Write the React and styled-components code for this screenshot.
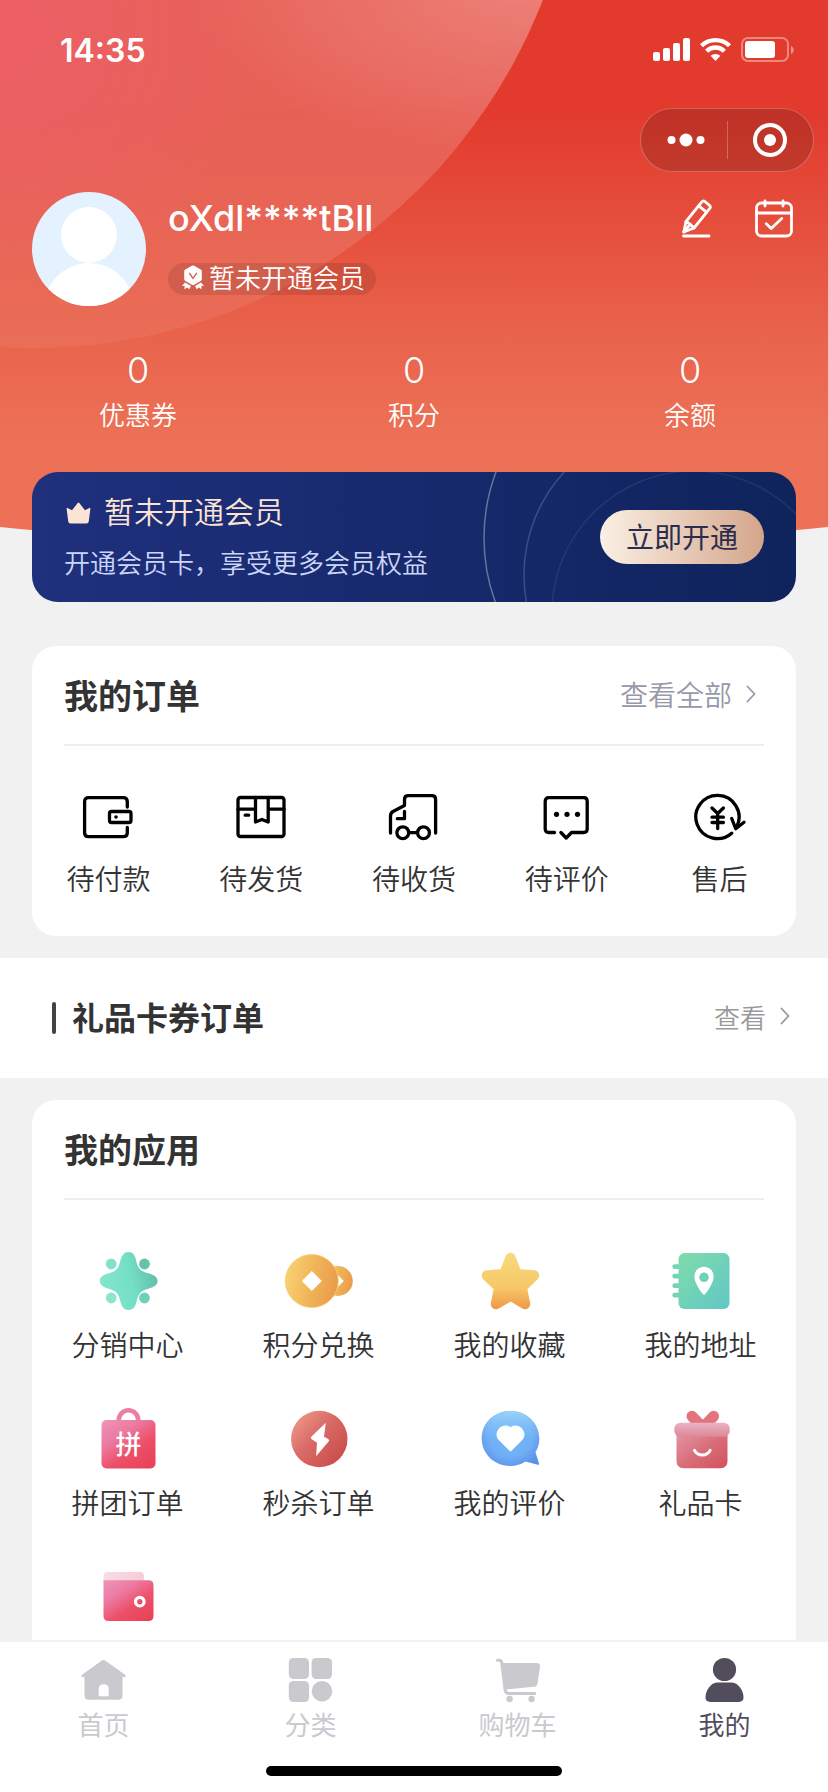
import styled, { createGlobalStyle } from 'styled-components';

const stats = [
    { value: 0, label: '优惠券' },
    { value: 0, label: '积分' },
    { value: 0, label: '余额' },
];

const orders = [
    { label: '待付款', Icon: PayIcon },
    { label: '待发货', Icon: PackageIcon },
    { label: '待收货', Icon: TruckIcon },
    { label: '待评价', Icon: CommentIcon },
    { label: '售后', Icon: RefundIcon },
];

const apps = [
    { label: '分销中心', Icon: ShareIcon },
    { label: '积分兑换', Icon: CoinIcon },
    { label: '我的收藏', Icon: StarIcon },
    { label: '我的地址', Icon: AddressIcon },
    { label: '拼团订单', Icon: BagIcon },
    { label: '秒杀订单', Icon: FlashIcon },
    { label: '我的评价', Icon: ReviewIcon },
    { label: '礼品卡', Icon: GiftIcon },
    { Icon: WalletIcon },
];

const tabs = [
    { label: '首页', Icon: HomeIcon },
    { label: '分类', Icon: CategoryIcon },
    { label: '购物车', Icon: CartIcon },
    { label: '我的', Icon: UserIcon, active: true },
];

const App = () => {
    return (
        <Screen>
            <GlobalStyle />
            <Content>
                <Header>
                    <Backdrop />
                    <StatusBar>
                        <Time>14:35</Time>
                        <StatusIcons />
                    </StatusBar>
                    <Capsule>
                        <CapsuleButton aria-label="更多">
                            <svg width="44" height="20" viewBox="-4 0 44 20" fill="#fff">
                                <circle cx="5.500" cy="10" r="4" />
                                <circle cx="20" cy="10" r="6.500" />
                                <circle cx="34.500" cy="10" r="4" />
                            </svg>
                        </CapsuleButton>
                        <CapsuleButton aria-label="关闭">
                            <svg width="36" height="36" viewBox="0 0 36 36">
                                <circle cx="18" cy="18" r="15" fill="none" stroke="#fff" strokeWidth="4" />
                                <circle cx="18" cy="18" r="6" fill="#fff" />
                            </svg>
                        </CapsuleButton>
                    </Capsule>
                    <Profile>
                        <Avatar viewBox="0 0 114 114">
                            <circle cx="57" cy="57" r="57" fill="#e3f2fe" />
                            <clipPath id="avatar">
                                <circle cx="57" cy="57" r="57" />
                            </clipPath>
                            <circle cx="57" cy="43" r="28" fill="#fff" />
                            <circle cx="57" cy="116" r="45" fill="#fff" clipPath="url(#avatar)" />
                        </Avatar>
                        <Info>
                            <Name>oXdl****tBll</Name>
                            <Badge>
                                <MedalIcon />
                                暂未开通会员
                            </Badge>
                        </Info>
                        <Actions>
                            <IconButton aria-label="编辑">
                                <EditIcon />
                            </IconButton>
                            <IconButton aria-label="签到">
                                <CalendarIcon />
                            </IconButton>
                        </Actions>
                    </Profile>
                    <Stats>
                        {stats.map(({ value, label }) => (
                            <Stat href="#" key={label}>
                                <strong>{value}</strong>
                                <span>{label}</span>
                            </Stat>
                        ))}
                    </Stats>
                </Header>

                <VipCard>
                    <VipRings />
                    <div>
                        <VipTitle>
                            <CrownIcon />
                            暂未开通会员
                        </VipTitle>
                        <VipText>开通会员卡，享受更多会员权益</VipText>
                    </div>
                    <OpenButton>立即开通</OpenButton>
                </VipCard>

                <Card>
                    <CardHeader>
                        <h2>我的订单</h2>
                        <MoreLink href="#" $size={28} $color="#9699a9">
                            查看全部
                            <Chevron />
                        </MoreLink>
                    </CardHeader>
                    <OrderGrid>
                        {orders.map(({ label, Icon }) => (
                            <OrderItem href="#" key={label}>
                                <Icon />
                                <span>{label}</span>
                            </OrderItem>
                        ))}
                    </OrderGrid>
                </Card>

                <GiftRow>
                    <h2>礼品卡券订单</h2>
                    <MoreLink href="#" $size={26} $color="#999">
                        查看
                        <Chevron />
                    </MoreLink>
                </GiftRow>

                <Card>
                    <CardHeader>
                        <h2>我的应用</h2>
                    </CardHeader>
                    <AppGrid>
                        {apps.map(({ label, Icon }, i) => (
                            <AppItem href="#" key={i} aria-label={label || '钱包'}>
                                <Icon />
                                {label && <span>{label}</span>}
                            </AppItem>
                        ))}
                    </AppGrid>
                </Card>
            </Content>

            <TabBar>
                <Tabs>
                    {tabs.map(({ label, Icon, active }) => (
                        <Tab href="#" key={label} $active={active}>
                            <Icon />
                            <span>{label}</span>
                        </Tab>
                    ))}
                </Tabs>
                <HomeIndicator />
            </TabBar>
        </Screen>
    );
};

/* ---------- Icons ---------- */

function StatusIcons() {
    return (
        <svg width="141" height="26" viewBox="0 0 141 26" fill="#fff">
            <rect x="0" y="15" width="7" height="9" rx="2" />
            <rect x="10" y="11" width="7" height="13" rx="2" />
            <rect x="20" y="6" width="7" height="18" rx="2" />
            <rect x="30" y="1" width="7" height="23" rx="2" />
            <g fill="none" stroke="#fff" strokeWidth="4.4">
                <path d="M48.500 8.800a20 20 0 0 1 28 0" />
                <path d="M53.600 14.200a12.600 12.600 0 0 1 17.800 0" />
            </g>
            <path d="M57.600 18.800a7.200 7.200 0 0 1 9.800 0L62.500 24Z" />
            <rect x="89" y="1" width="46" height="23" rx="6" fill="none" stroke="#fff" strokeOpacity=".4" strokeWidth="2" />
            <rect x="92" y="4" width="30" height="17" rx="3" />
            <path d="M138 9c3.600 1.500 3.600 6.500 0 8Z" opacity=".45" />
        </svg>
    );
}

function MedalIcon() {
    return (
        <svg width="28" height="28" viewBox="0 0 28 28" fill="#fff">
            <path d="M12.800 .8q1.200-.7 2.400 0l6.500 3.700q1.100.7 1.100 2v7.600q0 1.300-1.100 2l-6.500 3.700q-1.200.7-2.400 0l-6.500-3.700q-1.100-.7-1.100-2V6.500q0-1.300 1.100-2Z" />
            <path d="M6 17.500l6 3.400-1.800 3.300-2-1.700-2.800 1.700.3-3.200-2.700-.3ZM22 17.500l-6 3.400 1.800 3.300 2-1.700 2.800 1.700-.3-3.200 2.700-.3Z" />
            <path d="M10.300 8l3.700 5.300 3.900-5.500" fill="none" stroke="#d4604f" strokeWidth="1.400" />
        </svg>
    );
}

function EditIcon() {
    return (
        <svg width="44" height="44" viewBox="0 0 44 44" fill="none" stroke="#fff" strokeWidth="2.800" strokeLinecap="round" strokeLinejoin="round">
            <path d="M10 25.500 25.800 5.800q1.400-1.700 3.100-.3l4.600 3.800q1.700 1.400.3 3.100L18 32 7.800 36Z" />
            <path d="M22.700 9.800l7.800 6.400M10 25.500l4.500 3 3.500 3.500M7.800 36l5-6" />
            <path d="M7.500 40h25.500" />
        </svg>
    );
}

function CalendarIcon() {
    return (
        <svg width="44" height="44" viewBox="0 0 44 44" fill="none" stroke="#fff" strokeWidth="2.800" strokeLinecap="round" strokeLinejoin="round">
            <rect x="4.500" y="7" width="35" height="33" rx="5" />
            <path d="M4.500 17h35M13 5v5M31 5v5M14.300 27.700l4.900 4.800 10.500-10" />
        </svg>
    );
}

function VipRings() {
    return (
        <Rings viewBox="464 472 332 130" fill="none" stroke="#fff" strokeWidth="1.500">
            <circle cx="672" cy="538" r="188" strokeOpacity=".35" />
            <circle cx="676" cy="575" r="152" strokeOpacity=".18" />
            <circle cx="694" cy="613" r="142" strokeOpacity=".08" />
        </Rings>
    );
}

function CrownIcon() {
    return (
        <svg width="28" height="28" viewBox="0 0 28 28" fill="#fbe3d5">
            <path d="M2.600 10.500q0-1 1-.5L8 12.300 13.700 5q.8-1 1.600 0L21 12.300l4.400-2.300q1-.5 1 .5l-1.600 12.800q-.3 2.200-2.300 2.200H6.500q-2 0-2.300-2.200Z" />
        </svg>
    );
}

function Chevron() {
    return (
        <svg width="10" height="18" viewBox="0 0 10 18" fill="none" stroke="currentColor" strokeWidth="1.800" strokeLinecap="round" strokeLinejoin="round">
            <path d="M1.500 1.500L8.500 9l-7 7.500" />
        </svg>
    );
}

function PayIcon() {
    return (
        <OrderSvg>
            <path d="M47.300 17V11.700q0-4-4-4H8.600q-4 0-4 4v31q0 4 4 4h34.700q4 0 4-4v-5.200" />
            <rect x="29.500" y="21.500" width="21.500" height="11" rx="2" />
            <circle cx="36" cy="27" r="1.800" fill="#000" stroke="none" />
        </OrderSvg>
    );
}

function PackageIcon() {
    return (
        <OrderSvg>
            <rect x="5" y="7.500" width="46" height="39" rx="2.500" />
            <path d="M5 19.200h17.500M35.200 19.200H51M22.500 7.500V32l6.400-2.500 6.300 2.500V7.500M12.200 25.200h3.500" />
        </OrderSvg>
    );
}

function TruckIcon() {
    return (
        <OrderSvg>
            <path d="M4.500 43V26q0-3 2.500-4.500L18.500 15.500V9.500q0-3.800 3.800-3.800h23.500q3.800 0 3.800 3.800V43" />
            <path d="M18.500 21.500v7.200h-7.200M22.800 42.700h8.500" />
            <circle cx="16.800" cy="42.700" r="5.900" />
            <circle cx="37.500" cy="42.700" r="5.900" />
        </OrderSvg>
    );
}

function CommentIcon() {
    return (
        <OrderSvg>
            <path d="M15.500 42.500H9.700q-3.500 0-3.500-3.500V11.200q0-3.500 3.500-3.500h35q3.500 0 3.500 3.500V39q0 3.500-3.500 3.500H32.500L27.200 48l-5.300-5.500" />
            <g fill="#000" stroke="none">
                <circle cx="17.500" cy="24.300" r="2.600" />
                <circle cx="28" cy="24.300" r="2.600" />
                <circle cx="38.500" cy="24.300" r="2.600" />
            </g>
        </OrderSvg>
    );
}

function RefundIcon() {
    return (
        <OrderSvg>
            <path d="M39.700 43.200a21.600 21.600 0 1 1 5.500-7.500" />
            <path d="M39.700 28.500l4 10.200 8.300-6.400" />
            <path d="M20 18l5.700 5.500 5.700-5.500M25.700 23.500v15M20 27.200h11.400M20 32.500h11.400" />
        </OrderSvg>
    );
}

function ShareIcon() {
    return (
        <AppSvg>
            <linearGradient id="share" x1="0" y1=".6" x2="1" y2=".4">
                <stop offset="0" stopColor="#84e6ca" />
                <stop offset=".55" stopColor="#74dfc5" />
                <stop offset="1" stopColor="#5fbfa9" />
            </linearGradient>
            <path
                fill="url(#share)"
                d="M36.500 8C41 8 43 11.500 44 16C46 24.500 48 27 57 29.500C62 31 65.500 33 65.500 37C65.500 41 62 43 57 44.500C48 47 46.500 49.500 44.500 58C43 63 41 66 36.500 66C32 66 30 63 28.500 58C26.500 49.500 25 47 16 44.500C11 43 7.800 41 7.800 37C7.800 33 11 31 16 29.500C25 27 26.500 24.500 28.500 16C30 11.500 32 8 36.500 8Z"
            />
            <circle cx="19.200" cy="20" r="5.400" fill="#86e0c9" />
            <circle cx="52.500" cy="20" r="5.400" fill="#66c2ae" />
            <circle cx="19.200" cy="54" r="5.400" fill="#8ce6cd" />
            <circle cx="52.500" cy="54" r="5.400" fill="#6fd0ba" />
        </AppSvg>
    );
}

function CoinIcon() {
    return (
        <AppSvg>
            <linearGradient id="coin" x1="0" y1=".4" x2="1" y2=".6">
                <stop offset="0" stopColor="#f8d273" />
                <stop offset=".5" stopColor="#f1b458" />
                <stop offset="1" stopColor="#ea9a4b" />
            </linearGradient>
            <circle cx="54.800" cy="37" r="15" fill="url(#coin)" />
            <path d="M54.800 31l6 6-6 6Z" fill="#fff" />
            <circle cx="28.800" cy="37" r="26.500" fill="url(#coin)" stroke="#f6cd6c" strokeWidth=".8" />
            <path d="M28.800 27l10 10-10 10-10-10Z" fill="#fff" />
        </AppSvg>
    );
}

function StarIcon() {
    return (
        <AppSvg>
            <linearGradient id="star" gradientUnits="userSpaceOnUse" x1="36" y1="8" x2="36" y2="67">
                <stop offset="0" stopColor="#f8da7c" />
                <stop offset=".6" stopColor="#f6c868" />
                <stop offset="1" stopColor="#ef9345" />
            </linearGradient>
            <path
                d="M36.500 14l6.200 16.300 17.300 1.200-12.300 12L51 60 36.500 51.500 22 60l3.300-16.500-12.300-12 17.300-1.200Z"
                fill="url(#star)"
                stroke="url(#star)"
                strokeWidth="10.500"
                strokeLinejoin="round"
            />
        </AppSvg>
    );
}

function AddressIcon() {
    return (
        <AppSvg>
            <linearGradient id="address" x1="0" y1="0" x2="1" y2="1">
                <stop offset="0" stopColor="#80dcab" />
                <stop offset="1" stopColor="#61c7c6" />
            </linearGradient>
            <path d="M9.700 22.700h6M9.700 32.200h6M9.700 41.700h6M9.700 51.200h6" stroke="#74d4b2" strokeWidth="4.800" strokeLinecap="round" />
            <rect x="13.500" y="9" width="51" height="56" rx="6" fill="url(#address)" />
            <path
                fill="#fff"
                fillRule="evenodd"
                d="M39 22.700c5.500 0 9.600 4.200 9.600 9.800 0 5-3.600 11.500-8.400 17.400q-1.200 1.500-2.400 0C33 44 29.400 37.500 29.400 32.500c0-5.600 4.100-9.800 9.600-9.800ZM39 28.500a4.800 4.800 0 1 0 0 9.600 4.800 4.800 0 0 0 0-9.600Z"
            />
        </AppSvg>
    );
}

function PinkGradient({ id }) {
    return (
        <linearGradient id={id} x1=".1" y1="0" x2=".9" y2="1">
            <stop offset="0" stopColor="#ef90b6" />
            <stop offset=".3" stopColor="#ec7ba2" />
            <stop offset=".62" stopColor="#ec5068" />
            <stop offset="1" stopColor="#e94156" />
        </linearGradient>
    );
}

function BagIcon() {
    return (
        <AppSvg>
            <PinkGradient id="bag" />
            <path d="M26.800 20v-2a9.700 9.700 0 0 1 19.400 0v2" fill="none" stroke="#ec7ea5" strokeWidth="4.600" />
            <rect x="9.500" y="18" width="54" height="48.500" rx="5" fill="url(#bag)" />
            <text x="36.500" y="52" textAnchor="middle" fontSize="26" fontWeight="500" fill="#fff">
                拼
            </text>
        </AppSvg>
    );
}

function FlashIcon() {
    return (
        <AppSvg>
            <linearGradient id="flash" x1=".1" y1=".1" x2=".9" y2=".8">
                <stop offset="0" stopColor="#ed9585" />
                <stop offset=".45" stopColor="#d96b68" />
                <stop offset="1" stopColor="#cb4f4c" />
            </linearGradient>
            <circle cx="36.300" cy="37" r="28.200" fill="url(#flash)" />
            <path d="M42.800 20.700L28.500 34.500q-1.300 1.500.2 2.700l5.300 3.600-.9 13.500L45.600 39.600q1.500-1.700-.4-2.700l-4.200-2.200Z" fill="#fff" />
        </AppSvg>
    );
}

function ReviewIcon() {
    return (
        <AppSvg>
            <radialGradient id="review" cx=".5" cy=".45" r=".62">
                <stop offset="0" stopColor="#6fb9f8" />
                <stop offset=".6" stopColor="#70b0f5" />
                <stop offset="1" stopColor="#5b8fea" />
            </radialGradient>
            <linearGradient id="reviewTop" x1="0" y1="0" x2="0" y2="1">
                <stop offset="0" stopColor="#9ad4fa" />
                <stop offset=".55" stopColor="#7fc0f8" stopOpacity="0" />
            </linearGradient>
            <path
                fill="url(#review)"
                d="M36.500 9C52.600 9 65.300 21 65.300 36.500c0 5-1.300 9.700-3.800 13.800L65 61.500q.3 1.500-1.300 1.300L51.500 59.500C47 62.300 42 64 36.500 64 20.500 64 7.700 52 7.700 36.500S20.500 9 36.500 9Z"
            />
            <ellipse cx="36.500" cy="36.500" rx="28.800" ry="27.500" fill="url(#reviewTop)" />
            <path d="M36.500 25.200c3.500-2.700 8.500-2 11.500 1.200 3.300 3.600 3.300 8.800-.2 12.200L37.500 48.700q-1 1-2 0L25.200 38.600c-3.500-3.400-3.500-8.600-.2-12.200 3-3.200 8-3.900 11.500-1.200Z" fill="#fff" />
        </AppSvg>
    );
}

function GiftIcon() {
    return (
        <AppSvg>
            <linearGradient id="gift" x1="0" y1="0" x2="1" y2="1">
                <stop offset="0" stopColor="#e29aa6" />
                <stop offset=".5" stopColor="#da6f7c" />
                <stop offset="1" stopColor="#d25059" />
            </linearGradient>
            <linearGradient id="lid" x1="0" y1="0" x2="0" y2="1">
                <stop offset="0" stopColor="#eab2c4" />
                <stop offset="1" stopColor="#dc8896" />
            </linearGradient>
            <path d="M27 14.300l7 7.200M48.600 14.300l-7 7.200" stroke="#e2747b" strokeWidth="11" strokeLinecap="round" />
            <path d="M11.500 28h51v31q0 7.300-7.300 7.300H18.800q-7.300 0-7.300-7.300Z" fill="url(#gift)" />
            <rect x="9.300" y="20.800" width="55.500" height="14" rx="6" fill="url(#lid)" />
            <path d="M29.500 48.300c3 6.200 12.600 6.200 15.600 0" fill="none" stroke="#fff" strokeWidth="3" strokeLinecap="round" />
        </AppSvg>
    );
}

function WalletIcon() {
    return (
        <AppSvg>
            <PinkGradient id="wallet" />
            <linearGradient id="flap" x1="0" y1="0" x2="1" y2="0">
                <stop offset="0" stopColor="#f9dce6" />
                <stop offset="1" stopColor="#f6ccd6" />
            </linearGradient>
            <path d="M11.500 22v-6q0-4 4-4h32.800q3.500 0 3.500 3.500V22Z" fill="url(#flap)" />
            <path d="M11.500 20.300h45q5 0 5 5V56q0 5-5 5h-40q-5 0-5-5Z" fill="url(#wallet)" />
            <circle cx="47.800" cy="41.700" r="4.300" fill="none" stroke="#fff" strokeWidth="3.200" />
        </AppSvg>
    );
}

function HomeIcon() {
    return (
        <TabSvg>
            <path
                fillRule="evenodd"
                d="M20.800 5.200q2.700-2.400 5.400 0L45 18.800q1 .8.700 2.200h-3.200v18.500q0 4.300-4.300 4.300H8.800q-4.300 0-4.300-4.300V21H1.400q-.4-1.400.6-2.200ZM18.700 40.300h10V33q0-4.700-5-4.700t-5 4.700Z"
            />
        </TabSvg>
    );
}

function CategoryIcon() {
    return (
        <TabSvg>
            <rect x="1.800" y="2" width="20.200" height="21" rx="4.500" />
            <rect x="24.600" y="2" width="20.400" height="21" rx="4.500" />
            <rect x="1.800" y="25" width="20.200" height="21" rx="4.500" />
            <circle cx="35" cy="35.300" r="10.300" />
        </TabSvg>
    );
}

function CartIcon() {
    return (
        <TabSvg>
            <path d="M7 7h35.500q4 0 3.500 3.800L43.500 27.500q-.4 3-3.200 3.300L13 33.300H10Z" />
            <path d="M3.500 4.200h1.800q2 0 2.400 2.200l3.300 26.800q.5 4.200 4.200 4.200h25.600" fill="none" stroke="currentColor" strokeWidth="3" strokeLinecap="round" />
            <circle cx="15.600" cy="43" r="3.200" />
            <circle cx="37.600" cy="43" r="3.200" />
        </TabSvg>
    );
}

function UserIcon() {
    return (
        <TabSvg>
            <circle cx="23.500" cy="13.500" r="11.600" />
            <path d="M17 26.500h13c7.500 0 12.500 8 12.500 15 0 3.500-2.500 4.500-6 4.500h-26c-3.500 0-6-1-6-4.500 0-7 5-15 12.500-15Z" />
        </TabSvg>
    );
}

/* ---------- Styles ---------- */

const GlobalStyle = createGlobalStyle`
    * {
        box-sizing: border-box;
    }
    body {
        margin: 0;
        background-color: #f1f1f1;
        color: #333;
        font-family: Inter, 'Noto Sans CJK SC', sans-serif;
    }
    h1, h2, p {
        margin: 0;
    }
    a {
        color: inherit;
        text-decoration: none;
    }
    button {
        border: 0;
        padding: 0;
        background: none;
        color: inherit;
        font-family: inherit;
        cursor: pointer;
    }
    svg {
        display: block;
        flex-shrink: 0;
    }
`;

const Screen = styled.div`
    display: flex;
    flex-direction: column;
    height: 100vh;
`;

const Content = styled.main`
    flex: 1;
    min-height: 0;
    overflow-y: auto;
    scrollbar-width: none;
`;

const Header = styled.header`
    position: relative;
    z-index: 0;
    padding-bottom: 38px;
    color: white;
`;

const Backdrop = styled.div`
    position: absolute;
    z-index: -1;
    top: 0;
    left: 0;
    width: 100%;
    height: 548px;
    overflow: hidden;
    background: linear-gradient(#e23a2d 110px, #e9644c 340px, #ec7156 440px);
    clip-path: ellipse(182% 100% at 50% 0);

    /* Grand disque clair en haut à gauche */
    &::before {
        content: '';
        position: absolute;
        top: -744px;
        left: -512px;
        width: 1092px;
        height: 1092px;
        border-radius: 50%;
        background:
            radial-gradient(ellipse 340px 170px at 1040px 730px, rgba(255, 255, 255, 0.2), transparent),
            radial-gradient(circle at 512px 774px, rgba(246, 90, 140, 0.3), transparent 260px),
            linear-gradient(rgba(255, 255, 255, 0.2) 850px, rgba(255, 255, 255, 0.06) 1092px);
    }
`;

const StatusBar = styled.div`
    display: flex;
    align-items: center;
    justify-content: space-between;
    height: 100px;
    padding: 0 34px 0 60px;
`;

const Time = styled.span`
    font-size: 32px;
    font-weight: 600;
`;

const Capsule = styled.div`
    display: flex;
    align-items: center;
    width: 174px;
    height: 64px;
    margin: 8px 14px 0 auto;
    border: 1px solid rgba(255, 255, 255, 0.25);
    border-radius: 32px;
    background-color: rgba(0, 0, 0, 0.15);
`;

const CapsuleButton = styled.button`
    flex: 1;
    display: flex;
    align-items: center;
    justify-content: center;
    height: 38px;

    & + & {
        border-left: 1px solid rgba(255, 255, 255, 0.25);
    }
`;

const Profile = styled.section`
    display: flex;
    gap: 22px;
    padding: 20px 32px 0;
`;

const Avatar = styled.svg`
    width: 114px;
    height: 114px;
`;

const Info = styled.div`
    flex: 1;
    display: flex;
    flex-direction: column;
    align-items: flex-start;
    justify-content: space-between;
    padding: 4px 0 11px;
`;

const Name = styled.h1`
    font-size: 36px;
    font-weight: 500;
    line-height: 44px;
`;

const Badge = styled.span`
    display: flex;
    align-items: center;
    gap: 2px;
    height: 32px;
    padding: 0 11px;
    border-radius: 16px;
    background-color: rgba(0, 0, 0, 0.1);
    font-size: 26px;
    font-weight: 350;
    line-height: 32px;
`;

const Actions = styled.div`
    display: flex;
    align-items: flex-start;
    gap: 32px;
    padding-top: 4px;
`;

const IconButton = styled.button`
    width: 44px;
    height: 44px;
`;

const Stats = styled.div`
    display: grid;
    grid-template-columns: repeat(3, 1fr);
    padding-top: 42px;
`;

const Stat = styled.a`
    display: flex;
    flex-direction: column;
    align-items: center;
    gap: 6px;

    strong {
        font-size: 36px;
        font-weight: 300;
        line-height: 44px;
    }
    span {
        font-size: 26px;
        font-weight: 350;
        line-height: 36px;
    }
`;

const VipCard = styled.section`
    position: relative;
    z-index: 0;
    display: flex;
    align-items: center;
    justify-content: space-between;
    height: 130px;
    margin: 0 32px 44px;
    padding: 0 32px;
    border-radius: 26px;
    background: linear-gradient(to right, #1f307d, #0f235c);
    overflow: hidden;
`;

const Rings = styled.svg`
    position: absolute;
    z-index: -1;
    top: 0;
    right: 0;
    width: 332px;
    height: 130px;
`;

const VipTitle = styled.h2`
    display: flex;
    align-items: center;
    gap: 12px;
    color: #fbe3d5;
    font-size: 30px;
    font-weight: 350;
    line-height: 40px;
`;

const VipText = styled.p`
    margin-top: 14px;
    color: #ccd6f8;
    font-size: 26px;
    font-weight: 350;
    line-height: 36px;
`;

const OpenButton = styled.button`
    width: 164px;
    height: 54px;
    padding-bottom: 2px;
    border-radius: 27px;
    background: linear-gradient(to right, #faf0e4, #d5a58b);
    color: #2a2e4c;
    font-size: 28px;
    font-weight: 400;
`;

const Card = styled.section`
    margin: 0 32px 22px;
    border-radius: 24px;
    background-color: white;
`;

const CardHeader = styled.div`
    display: flex;
    align-items: center;
    justify-content: space-between;
    height: 100px;
    margin: 0 32px;
    padding-bottom: 2px;
    border-bottom: 2px solid #eee;

    h2 {
        font-size: 34px;
        font-weight: 700;
    }
`;

const MoreLink = styled.a`
    display: flex;
    align-items: center;
    gap: 14px;
    padding-right: 8px;
    color: ${({ $color }) => $color};
    font-size: ${({ $size }) => $size}px;
    font-weight: 350;
`;

const OrderGrid = styled.div`
    display: grid;
    grid-template-columns: repeat(5, 1fr);
    padding: 44px 0 36px;
`;

const OrderItem = styled.a`
    display: flex;
    flex-direction: column;
    align-items: center;
    gap: 14px;
    font-size: 28px;
    font-weight: 350;
    line-height: 40px;
`;

const OrderSvg = styled.svg.attrs({ viewBox: '0 0 56 56' })`
    width: 56px;
    height: 56px;
    fill: none;
    stroke: black;
    stroke-width: 3.3px;
    stroke-linecap: round;
    stroke-linejoin: round;
`;

const GiftRow = styled.section`
    display: flex;
    align-items: center;
    justify-content: space-between;
    height: 120px;
    margin-bottom: 22px;
    padding: 0 30px 4px 52px;
    background-color: white;

    h2 {
        display: flex;
        align-items: center;
        gap: 16px;
        font-size: 32px;
        font-weight: 700;
    }
    h2::before {
        content: '';
        width: 4px;
        height: 32px;
        margin-top: 4px;
        border-radius: 2px;
        background-color: #444;
    }
`;

const AppGrid = styled.div`
    display: grid;
    grid-template-columns: repeat(4, 1fr);
    row-gap: 36px;
    padding: 44px 0 38px;
`;

const AppItem = styled.a`
    display: flex;
    flex-direction: column;
    align-items: center;
    gap: 10px;
    font-size: 28px;
    font-weight: 350;
    line-height: 40px;
`;

const AppSvg = styled.svg.attrs({ viewBox: '0 0 72 72' })`
    width: 72px;
    height: 72px;
`;

const TabBar = styled.footer`
    padding-bottom: 16px;
    border-top: 2px solid #f1f1f1;
    background-color: white;
`;

const Tabs = styled.nav`
    display: grid;
    grid-template-columns: repeat(4, 1fr);
    padding: 14px 0 24px;
`;

const Tab = styled.a`
    display: flex;
    flex-direction: column;
    align-items: center;
    gap: 6px;
    color: ${({ $active }) => ($active ? '#514d5d' : '#cac9ce')};
    font-size: 26px;
    font-weight: 400;
    line-height: 32px;
`;

const TabSvg = styled.svg.attrs({ viewBox: '0 0 48 48' })`
    width: 48px;
    height: 48px;
    fill: currentColor;
`;

const HomeIndicator = styled.div`
    width: 296px;
    height: 10px;
    margin: 0 auto;
    border-radius: 5px;
    background-color: black;
`;

export default App;
